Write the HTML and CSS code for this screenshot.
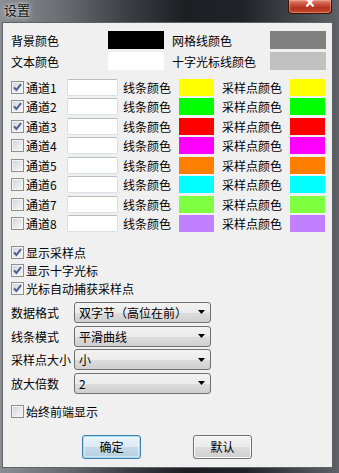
FILE: index.html
```html
<!DOCTYPE html>
<html>
<head>
<meta charset="utf-8">
<link rel="stylesheet" href="styles.css">
</head>
<body>
<div class="window">
  <div class="titlebar">
    <span class="title">设置</span>
    <div class="close">
      <svg width="10" height="9" viewBox="0 0 10 9"><path d="M1.5 0.5 L8.5 8.5 M8.5 0.5 L1.5 8.5" stroke="#fff" stroke-width="2.2" fill="none"/></svg>
    </div>
  </div>
  <div class="client">
    <div class="colors">
      <span>背景颜色</span><span class="sw" style="background:#000000"></span><span class="lbl2">网格线颜色</span><span class="sw" style="background:#808080"></span>
      <span>文本颜色</span><span class="sw" style="background:#ffffff"></span><span class="lbl2">十字光标线颜色</span><span class="sw" style="background:#c0c0c0"></span>
    </div>

    <div class="channels">
      <span class="cb on"><svg viewBox="0 0 11 11"><path d="M2 5.3 L4.4 8 L9 2.2" /></svg></span><span>通道1</span><span class="tb"></span><span>线条颜色</span><span class="cs" style="background:#ffff00"></span><span>采样点颜色</span><span class="cs" style="background:#ffff00"></span>
      <span class="cb on"><svg viewBox="0 0 11 11"><path d="M2 5.3 L4.4 8 L9 2.2" /></svg></span><span>通道2</span><span class="tb"></span><span>线条颜色</span><span class="cs" style="background:#00ff00"></span><span>采样点颜色</span><span class="cs" style="background:#00ff00"></span>
      <span class="cb on"><svg viewBox="0 0 11 11"><path d="M2 5.3 L4.4 8 L9 2.2" /></svg></span><span>通道3</span><span class="tb"></span><span>线条颜色</span><span class="cs" style="background:#ff0000"></span><span>采样点颜色</span><span class="cs" style="background:#ff0000"></span>
      <span class="cb"></span><span>通道4</span><span class="tb"></span><span>线条颜色</span><span class="cs" style="background:#ff00ff"></span><span>采样点颜色</span><span class="cs" style="background:#ff00ff"></span>
      <span class="cb"></span><span>通道5</span><span class="tb"></span><span>线条颜色</span><span class="cs" style="background:#ff8000"></span><span>采样点颜色</span><span class="cs" style="background:#ff8000"></span>
      <span class="cb"></span><span>通道6</span><span class="tb"></span><span>线条颜色</span><span class="cs" style="background:#00ffff"></span><span>采样点颜色</span><span class="cs" style="background:#00ffff"></span>
      <span class="cb"></span><span>通道7</span><span class="tb"></span><span>线条颜色</span><span class="cs" style="background:#80ff40"></span><span>采样点颜色</span><span class="cs" style="background:#80ff40"></span>
      <span class="cb"></span><span>通道8</span><span class="tb"></span><span>线条颜色</span><span class="cs" style="background:#c080ff"></span><span>采样点颜色</span><span class="cs" style="background:#c080ff"></span>
    </div>

    <div class="checks">
      <div class="chk"><span class="cb on"><svg viewBox="0 0 11 11"><path d="M2 5.3 L4.4 8 L9 2.2" /></svg></span><span>显示采样点</span></div>
      <div class="chk"><span class="cb on"><svg viewBox="0 0 11 11"><path d="M2 5.3 L4.4 8 L9 2.2" /></svg></span><span>显示十字光标</span></div>
      <div class="chk"><span class="cb on"><svg viewBox="0 0 11 11"><path d="M2 5.3 L4.4 8 L9 2.2" /></svg></span><span>光标自动捕获采样点</span></div>
    </div>

    <div class="selects">
      <span>数据格式</span><div class="combo"><span>双字节（高位在前）</span><svg width="7" height="4" viewBox="0 0 7 4"><path d="M0 0 H7 L3.5 4 Z" fill="#000"/></svg></div>
      <span>线条模式</span><div class="combo"><span>平滑曲线</span><svg width="7" height="4" viewBox="0 0 7 4"><path d="M0 0 H7 L3.5 4 Z" fill="#000"/></svg></div>
      <span>采样点大小</span><div class="combo"><span>小</span><svg width="7" height="4" viewBox="0 0 7 4"><path d="M0 0 H7 L3.5 4 Z" fill="#000"/></svg></div>
      <span>放大倍数</span><div class="combo"><span>2</span><svg width="7" height="4" viewBox="0 0 7 4"><path d="M0 0 H7 L3.5 4 Z" fill="#000"/></svg></div>
    </div>

    <div class="chk top">
      <span class="cb"></span><span>始终前端显示</span>
    </div>

    <div class="buttons">
      <div class="btn default">确定</div>
      <div class="btn">默认</div>
    </div>
  </div>
</div>
</body>
</html>
```

FILE: styles.css
```css
html, body {
  margin: 0;
  padding: 0;
  background: #1e2024;
}
body {
  font-family: "Noto Sans CJK SC", "Noto Sans", sans-serif;
  font-size: 12px;
  color: #000;
}
.window {
  width: 339px;
  height: 473px;
  box-sizing: border-box;
  padding: 0 6px 5px 2px;
  display: flex;
  flex-direction: column;
  background: linear-gradient(90deg, #8a8e93 0%, #6a6e73 18%, #3a3d42 38%, #1c1e22 55%, #202327 72%, #45494e 88%, #5e6267 100%);
}
.titlebar {
  height: 22px;
  flex: none;
  display: flex;
  justify-content: space-between;
  align-items: flex-start;
  padding: 0 1px 0 2px;
}
.title {
  margin-top: 1px;
  line-height: 17px;
  font-size: 13px;
  color: #111;
  text-shadow: 0 0 6px rgba(235, 238, 242, 0.9), 0 0 3px rgba(235, 238, 242, 0.9);
}
.close {
  width: 44px;
  height: 14px;
  box-sizing: border-box;
  border: 1px solid #3b1008;
  border-top: none;
  border-radius: 0 0 4px 4px;
  background: linear-gradient(180deg, #e08a78 0%, #c9503a 35%, #b3341f 60%, #c8482c 100%);
  box-shadow: inset 0 0 0 1px rgba(255, 190, 170, 0.45);
  display: flex;
  justify-content: center;
  align-items: flex-end;
  padding-bottom: 6px;
  overflow: hidden;
}
.close svg {
  display: block;
  flex: none;
}
.client {
  flex: 1;
  background: #f0f0f0;
  border: 1px solid #5f6368;
  padding: 8px 0 0 8px;
  display: flex;
  flex-direction: column;
}
.colors {
  display: grid;
  grid-template-columns: 97px 56px 8px 98px 56px;
  grid-auto-rows: 18px;
  row-gap: 3px;
  align-items: center;
}
.colors .lbl2 {
  grid-column: 4;
}
.colors .sw:nth-child(2), .colors .sw:nth-child(6) {
  grid-column: 2;
}
.sw {
  height: 18px;
  align-self: stretch;
}
.channels {
  margin-top: 9px;
  display: grid;
  grid-template-columns: 15px 41px 56px 56px 43px 68px 35px;
  grid-auto-rows: 17px;
  row-gap: 2.43px;
  align-items: center;
}
.tb {
  width: 51px;
  height: 17px;
  box-sizing: border-box;
  background: #fff;
  border: 1px solid #dbdfe6;
  border-top-color: #b9bcc2;
  border-radius: 2px;
}
.cs {
  width: 35px;
  height: 17px;
}
.cb {
  width: 13px;
  height: 13px;
  box-sizing: border-box;
  border: 1px solid #8e8f8f;
  background: linear-gradient(135deg, #cdd0d5 0%, #e6e7e9 50%, #f8f8f8 100%);
  box-shadow: inset 0 0 0 1px #f4f4f4;
  display: flex;
  align-items: center;
  justify-content: center;
  flex: none;
}
.cb svg {
  width: 11px;
  height: 11px;
  display: block;
}
.cb svg path {
  fill: none;
  stroke: #4a5d94;
  stroke-width: 2;
}
.checks {
  margin-top: 11.5px;
  display: flex;
  flex-direction: column;
}
.chk {
  height: 18px;
  display: flex;
  align-items: center;
  gap: 2px;
}
.chk.top {
  margin-top: 9px;
}
.selects {
  margin-top: 4.5px;
  display: grid;
  grid-template-columns: 63px 137px;
  grid-auto-rows: 21px;
  row-gap: 2.67px;
  align-items: center;
}
.combo {
  height: 21px;
  box-sizing: border-box;
  border: 1px solid #707070;
  border-radius: 3px;
  background: linear-gradient(180deg, #f2f2f2 0%, #ebebeb 50%, #dddddd 51%, #cfcfcf 100%);
  display: flex;
  align-items: center;
  justify-content: space-between;
  padding: 0 5px 0 4px;
}
.combo svg {
  display: block;
}
.buttons {
  margin-top: 14px;
  padding-left: 71px;
  display: flex;
  gap: 52px;
}
.btn {
  width: 59px;
  height: 24px;
  box-sizing: border-box;
  border: 1px solid #707070;
  border-radius: 3px;
  background: linear-gradient(180deg, #f2f2f2 0%, #ebebeb 50%, #dddddd 51%, #cfcfcf 100%);
  box-shadow: inset 0 0 0 1px #fbfbfb;
  display: flex;
  align-items: center;
  justify-content: center;
}
.btn.default {
  border-color: #3c7fb1;
  background: linear-gradient(180deg, #eaf4fa 0%, #dbeaf4 50%, #c7dbe8 51%, #b6cfdf 100%);
  box-shadow: inset 0 0 0 1px #a8dcf5, inset 0 0 0 2px rgba(255, 255, 255, 0.35);
}
```
